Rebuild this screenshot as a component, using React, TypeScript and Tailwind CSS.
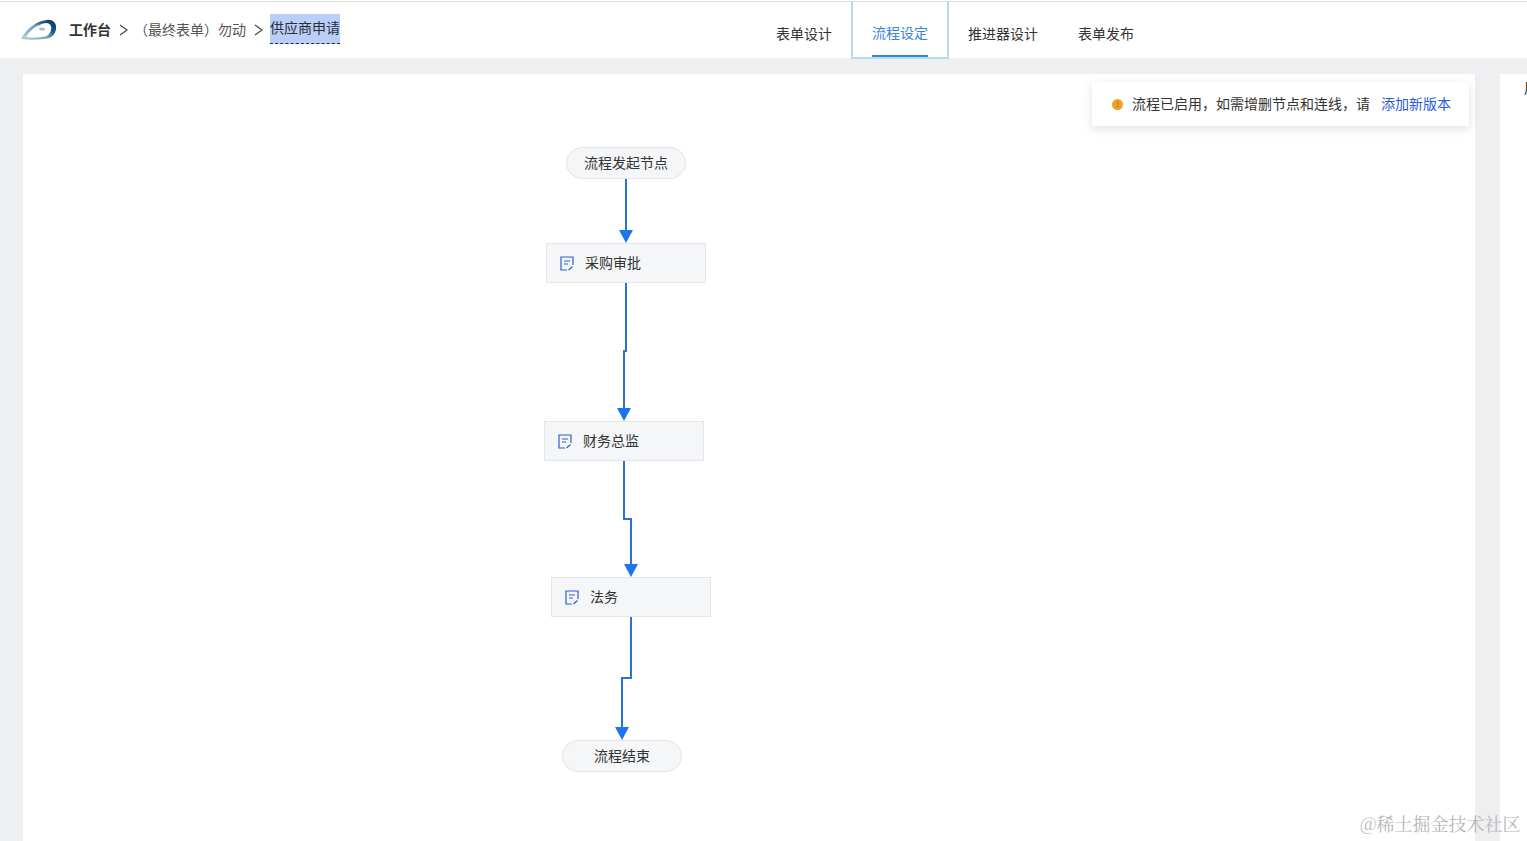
const tabs = ["表单设计", "流程设定", "推进器设计", "表单发布"];

const wires = [
  "M603 105 V160",
  "M603 209 V277 H601 V336",
  "M601 387 V445 H608 V492",
  "M608 543 V604 H599 V656",
];
const arrows = [
  "M596 156 H610 L603 169 Z",
  "M594 334 H608 L601 347 Z",
  "M601 490 H615 L608 503 Z",
  "M592 653 H606 L599 666 Z",
];

function Logo() {
  return (
    <svg width="38" height="22" viewBox="0 0 38 22" fill="none">
      <defs>
        <linearGradient id="logo-fill" x1="0" y1="1" x2="1" y2="0.3">
          <stop offset="0" stopColor="#b5d3de" />
          <stop offset="0.6" stopColor="#6f9fb6" />
          <stop offset="0.8" stopColor="#1d5a8c" />
          <stop offset="1" stopColor="#123f6e" />
        </linearGradient>
      </defs>
      <path d="M1 20 C6 10 16 2 27 1 C33 0 37 5 36 10 C35 16 31 20 24 20 C16 21 8 21 1 20 Z" fill="url(#logo-fill)" />
      <path d="M6 18 C10 11 18 5 26 4 C30 4 32 7 31 11 C30 15 27 18 22 18 C16 19 11 19 6 18 Z" fill="#fff" />
      <ellipse cx="22" cy="10" rx="3" ry="1.6" fill="#a5bcc9" />
    </svg>
  );
}

function Chevron() {
  return (
    <svg width="9" height="12" viewBox="0 0 9 12" fill="none" stroke="#444" strokeWidth="1.2">
      <path d="M1 1 L8 6 L1 11" />
    </svg>
  );
}

function NoteIcon() {
  return (
    <svg width="14" height="15" viewBox="0 0 14 15" fill="none" stroke="#2f5fc4" strokeWidth="1.2">
      <path d="M7 14 H1 V1 H13 V9" />
      <path d="M4 5 H10 M4 8 H8" />
      <path d="M8.5 14 L12.5 10.5" />
    </svg>
  );
}

function Pill({ className, label }: { className: string; label: string }) {
  return (
    <div className={`absolute flex h-8 w-[120px] items-center justify-center rounded-2xl border border-[#e2e5e9] bg-[#f5f6f8] pb-[2px] text-sm text-[#333] ${className}`}>
      {label}
    </div>
  );
}

function Task({ className, label }: { className: string; label: string }) {
  return (
    <div className={`absolute flex h-10 w-40 items-center gap-[11px] border border-[#e2e5e9] bg-[#f4f6f8] pl-[13px] text-sm text-[#333] ${className}`}>
      <NoteIcon />
      <span className="mb-[2px]">{label}</span>
    </div>
  );
}

export default function App() {
  return (
    <div className="relative flex h-[841px] w-[1527px] flex-col overflow-hidden bg-[#eeeff1] font-['Noto_Sans_CJK_SC','Noto_Sans',sans-serif]">
      <div className="h-px shrink-0 bg-white" />
      {/* Header */}
      <div className="flex h-[57px] shrink-0 border-t border-[#dcdcdc] bg-white">
        <div className="flex w-[756px] items-center pl-[20px] text-sm text-[#333]">
          <Logo />
          <span className="mb-[2px] ml-[11px] font-bold">工作台</span>
          <span className="ml-2"><Chevron /></span>
          <span className="mb-[2px] ml-[6px] text-[#555]">（最终表单）勿动</span>
          <span className="ml-2"><Chevron /></span>
          <span className="mb-[2px] ml-[7px] flex h-[30px] items-center border-b border-dashed border-[#1f2a44] bg-[#b9cef8] pb-[3px] text-[#2b2f36]">
            供应商申请
          </span>
        </div>
        <div className="flex text-sm text-[#333]">
          {tabs.map((tab, i) =>
            i === 1 ? (
              <div key={tab} className="-mx-px -mb-px flex flex-col border-x-2 border-b-2 border-[#b5dcf2] px-[19px] text-[#3b86d1]">
                <span className="flex flex-1 items-center pt-[6px]">{tab}</span>
                <span className="h-[2px] bg-[#2f86dc]" />
              </div>
            ) : (
              <div key={tab} className="flex items-center px-5 pt-[6px]">{tab}</div>
            )
          )}
        </div>
      </div>

      {/* Body */}
      <div className="flex flex-1 pt-4">
        <div className="relative ml-[23px] w-[1452px] bg-white">
          <svg className="absolute inset-0" width="1452" height="767" fill="none">
            {wires.map((d) => (
              <path key={d} d={d} stroke="#2b72d6" strokeWidth="2" />
            ))}
            {arrows.map((d) => (
              <path key={d} d={d} fill="#1f74ee" />
            ))}
          </svg>
          <Pill className="left-[543px] top-[73px]" label="流程发起节点" />
          <Task className="left-[523px] top-[169px]" label="采购审批" />
          <Task className="left-[521px] top-[347px]" label="财务总监" />
          <Task className="left-[528px] top-[503px]" label="法务" />
          <Pill className="left-[539px] top-[666px]" label="流程结束" />

          {/* Notice */}
          <div className="absolute left-[1069px] top-2 flex h-11 w-[377px] items-center bg-white pl-5 text-sm text-[#333] shadow-[0_3px_10px_rgba(0,0,0,0.12)]">
            <span className="flex h-[11px] w-[11px] items-center justify-center rounded-full bg-[#f0a124] text-[8px] leading-none text-[#8a5a10]">!</span>
            <span className="mb-[2px] ml-[9px]">流程已启用，如需增删节点和连线，请</span>
            <span className="mb-[2px] ml-[11px] text-[#2a5bd7]">添加新版本</span>
          </div>
        </div>
        <div className="ml-[25px] flex-1 overflow-hidden bg-white pt-[3px] pl-[24px] text-sm text-[#222]">
          <span className="block w-[40px]">周</span>
        </div>
      </div>

      {/* Watermark */}
      <div className="absolute left-[1360px] top-[809px] whitespace-nowrap font-['Noto_Serif_CJK_SC','Noto_Sans_CJK_SC',serif] text-lg text-[#b4b6b8]">
        @稀土掘金技术社区
      </div>
    </div>
  );
}
